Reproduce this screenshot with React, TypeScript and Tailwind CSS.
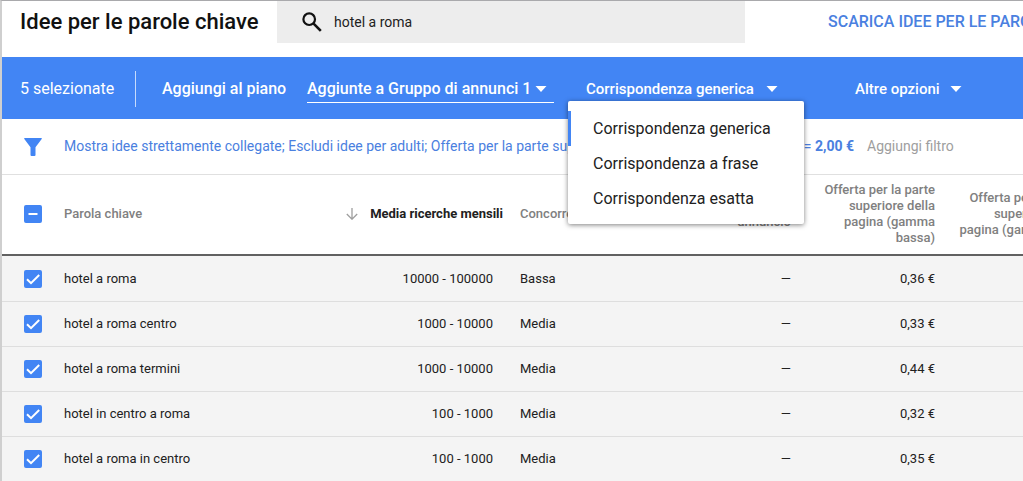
import { useEffect, useRef, useState } from "react";
import type { ReactNode } from "react";

type Keyword = { name: string; searches: string; competition: string; share: string; bid: string };

const KEYWORDS: Keyword[] = [
  { name: "hotel a roma", searches: "10000 - 100000", competition: "Bassa", share: "—", bid: "0,36 €" },
  { name: "hotel a roma centro", searches: "1000 - 10000", competition: "Media", share: "—", bid: "0,33 €" },
  { name: "hotel a roma termini", searches: "1000 - 10000", competition: "Media", share: "—", bid: "0,44 €" },
  { name: "hotel in centro a roma", searches: "100 - 1000", competition: "Media", share: "—", bid: "0,32 €" },
  { name: "hotel a roma in centro", searches: "100 - 1000", competition: "Media", share: "—", bid: "0,35 €" },
];

const MATCH_TYPES = ["Corrispondenza generica", "Corrispondenza a frase", "Corrispondenza esatta"];

function Caret() {
  return (
    <svg viewBox="0 0 12 6" className="h-[6px] w-3 shrink-0" fill="currentColor" aria-hidden="true">
      <path d="M0.5 0h11L6 6z" />
    </svg>
  );
}

function Tick({ label, partial = false }: { label: string; partial?: boolean }) {
  const ref = useRef<HTMLInputElement>(null);
  useEffect(() => {
    if (ref.current) ref.current.indeterminate = partial;
  }, [partial]);
  return (
    <label className="grid size-[18px] place-items-center">
      <input
        ref={ref}
        type="checkbox"
        defaultChecked={!partial}
        aria-label={label}
        className="peer col-start-1 row-start-1 size-[18px] appearance-none rounded-xs border-2 border-[#757575] checked:border-[#4285f4] checked:bg-[#4285f4] indeterminate:border-[#4285f4] indeterminate:bg-[#4285f4]"
      />
      <svg
        viewBox="0 0 18 18"
        className="pointer-events-none col-start-1 row-start-1 size-[18px]"
        fill="none"
        stroke="#fff"
        strokeWidth="2"
        aria-hidden="true"
      >
        <path d={partial ? "M4.5 9h9" : "M3 9.2l4 4L15.2 5"} />
      </svg>
    </label>
  );
}

function Head({ className = "", children }: { className?: string; children?: ReactNode }) {
  return (
    <th scope="col" className={`h-[81px] border-b-2 border-[#616161] pt-0 pb-[2px] align-middle font-medium ${className}`}>
      {children}
    </th>
  );
}

function Cell({ className = "", children }: { className?: string; children?: ReactNode }) {
  return (
    <td className={`h-[45px] border-t border-[#dedede] py-0 align-middle group-first:border-transparent ${className}`}>
      {children}
    </td>
  );
}

export default function App() {
  const [open, setOpen] = useState(true);
  const [match, setMatch] = useState(MATCH_TYPES[0]);

  return (
    <div className="min-h-screen overflow-hidden border-t border-l-2 border-t-[#a9a9ac] border-l-[#cfcfcf] bg-white font-[Roboto,'Liberation_Sans',sans-serif] text-[13px] text-[#212121]">
      <header className="flex h-14 items-start whitespace-nowrap">
        <h1 className="w-[275px] shrink-0 pl-[18px] text-[22px] leading-[42px] font-medium text-[#111]">
          Idee per le parole chiave
        </h1>
        <label className="flex h-[42px] min-w-[468px] flex-1 items-center gap-3 bg-[#ededed] pl-[25px]">
          <svg viewBox="0 0 20 20" className="size-5" fill="none" stroke="#111" strokeWidth="2.2" aria-hidden="true">
            <circle cx="7.2" cy="7.2" r="5.8" />
            <path d="M11.6 11.6l7.2 7.2" strokeWidth="2.6" />
          </svg>
          <input
            type="text"
            aria-label="Cerca parole chiave"
            defaultValue="hotel a roma"
            className="min-w-0 flex-1 bg-transparent text-[14px] text-[#212121] outline-none"
          />
        </label>
        <div className="w-[278px] shrink-0 overflow-hidden pl-[83px]">
          <a href="#scarica" className="text-[16px] leading-[42px] font-medium text-[#4a80e0]">
            SCARICA IDEE PER LE PAROLE CHIAVE
          </a>
        </div>
      </header>

      <div className="flex h-[62px] items-center bg-[#4285f4] pt-[2px] pl-[18px] text-[16px] font-medium whitespace-nowrap text-white">
        <div className="flex h-9 w-[116px] shrink-0 items-center border-r border-white/70 font-normal">
          5 selezionate
        </div>
        <button type="button" className="ml-[26px] w-[123px] shrink-0 text-left">
          Aggiungi al piano
        </button>
        <button
          type="button"
          className="ml-[22px] flex h-7 w-[247px] shrink-0 items-center gap-1 border-b border-white"
        >
          Aggiunte a Gruppo di annunci 1
          <Caret />
        </button>
        <div className="relative ml-8 w-[192px] shrink-0">
          <button
            type="button"
            aria-haspopup="listbox"
            aria-expanded={open}
            onClick={() => setOpen(!open)}
            className="flex items-center gap-3 text-[15px] leading-6"
          >
            {match}
            <Caret />
          </button>
          {open && (
            <ul
              role="listbox"
              aria-label="Tipo di corrispondenza"
              className="absolute top-6 -left-[18px] z-10 w-[236px] rounded-xs bg-white pt-[10px] pb-2 text-[16px] font-normal text-[#212121] shadow-[0_1px_5px_rgba(0,0,0,0.5)]"
            >
              {MATCH_TYPES.map((type) => (
                <li key={type} role="option" aria-selected={type === match}>
                  <button
                    type="button"
                    onClick={() => {
                      setMatch(type);
                      setOpen(false);
                    }}
                    className={`block h-[35px] w-full border-l-3 pl-[22px] text-left ${
                      type === match ? "border-[#4285f4]" : "border-transparent"
                    }`}
                  >
                    {type}
                  </button>
                </li>
              ))}
            </ul>
          )}
        </div>
        <button type="button" className="ml-[77px] flex shrink-0 items-center gap-[10px] text-[15px] leading-6">
          Altre opzioni
          <Caret />
        </button>
      </div>

      <div className="flex h-14 items-center border-b border-[#e0e0e0] pl-[22px] text-[14px] whitespace-nowrap">
        <svg viewBox="0 0 18 18" className="size-[18px] shrink-0" fill="#4285f4" aria-hidden="true">
          <path d="M0.7 0h16.6q1 0 .4 1L11.5 9.200V17q0 1-1 1h-3q-1 0-1-1V9.200L.3 1Q-.3 0 .7 0z" />
        </svg>
        <button type="button" className="ml-[22px] flex w-[790px] shrink-0 justify-between text-left text-[#4a80e0]">
          <span>Mostra idee strettamente collegate; Escludi idee per adulti; Offerta per la parte superiore</span>
          <span>
            = <b className="font-bold">2,00 €</b>
          </span>
        </button>
        <button type="button" className="ml-[13px] text-[#9e9e9e]">
          Aggiungi filtro
        </button>
      </div>

      <table className="w-full min-w-[1078px] table-fixed border-separate border-spacing-0">
        <colgroup>
          <col className="w-[62px]" />
          <col className="w-[266px]" />
          <col className="w-[173px]" />
          <col className="w-[127px]" />
          <col className="w-[161px]" />
          <col className="w-[144px]" />
          <col className="w-[145px]" />
        </colgroup>
        <thead className="text-left leading-4 text-[#808080]">
          <tr>
            <Head className="pl-[22px]">
              <Tick label="Seleziona tutte le parole chiave" partial />
            </Head>
            <Head>Parola chiave</Head>
            <Head className="text-[#212121]">
              <span className="flex items-center justify-end gap-3 font-bold whitespace-nowrap">
                <svg viewBox="0 0 12 12" className="size-3" fill="none" stroke="#9e9e9e" strokeWidth="1.3" aria-hidden="true">
                  <path d="M6 0v11M.8 6L6 11.200 11.200 6" />
                </svg>
                Media ricerche mensili
              </span>
            </Head>
            <Head className="pl-[17px]">Concorrenza</Head>
            <Head className="text-right">
              Quota impressioni
              <br />
              annuncio
            </Head>
            <Head className="pl-6 text-right">Offerta per la parte superiore della pagina (gamma bassa)</Head>
            <Head className="text-right whitespace-nowrap">
              Offerta per la parte
              <br />
              superiore della
              <br />
              pagina (gamma alta)
            </Head>
          </tr>
        </thead>
        <tbody className="bg-[#f4f4f4]">
          {KEYWORDS.map((k) => (
            <tr key={k.name} className="group">
              <Cell className="pl-[22px]">
                <Tick label={`Seleziona ${k.name}`} />
              </Cell>
              <Cell>{k.name}</Cell>
              <Cell className="pr-[10px] text-right">{k.searches}</Cell>
              <Cell className="pl-[17px]">{k.competition}</Cell>
              <Cell className="text-right">{k.share}</Cell>
              <Cell className="text-right">{k.bid}</Cell>
              <Cell />
            </tr>
          ))}
        </tbody>
      </table>
    </div>
  );
}
